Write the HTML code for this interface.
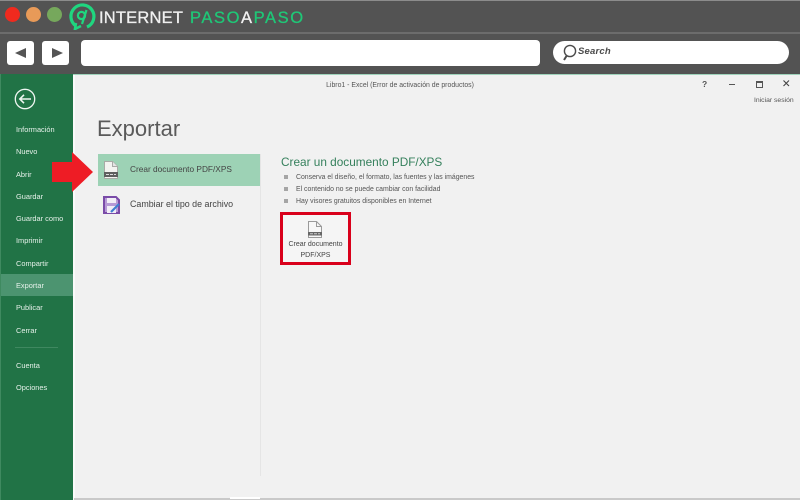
<!DOCTYPE html>
<html lang="es">
<head>
<meta charset="utf-8">
<title>Exportar</title>
<style>
html,body{margin:0;padding:0;background:#f1f1f1}
#p{position:relative;width:800px;height:500px;overflow:hidden;background:#f1f1f1;font-family:"Liberation Sans",sans-serif;color:#444;filter:blur(.25px)}
#p div,#p svg{position:absolute}
.t{white-space:nowrap;line-height:12px}
.m{left:16px;color:#e6f1ea;font-size:7.4px;line-height:12px;white-space:nowrap}
.b{color:#555;font-size:6.9px;left:296px;line-height:10px;white-space:nowrap}
.s{left:284px;width:4px;height:4px;background:#a5a5a5}
</style>
</head>
<body>
<div id="p">
<div style="left:0;top:0;width:800px;height:74px;background:#535353"></div>
<div style="left:0;top:0;width:800px;height:1px;background:#8c8c8c"></div>
<div style="left:0;top:32px;width:800px;height:2px;background:#6c6c6c"></div>
<div style="left:5px;top:7px;width:15px;height:15px;border-radius:50%;background:#f02a1e"></div>
<div style="left:26px;top:7px;width:15px;height:15px;border-radius:50%;background:#e89a58"></div>
<div style="left:47px;top:7px;width:15px;height:15px;border-radius:50%;background:#76a85c"></div>
<svg style="left:67px;top:2px" width="30" height="28" viewBox="0 0 30 28" fill="none" stroke="#1fd67f"><path d="M9 24 A11.5 11.5 0 1 1 20 25" stroke-width="3.2"/><path d="M9 21 L8 27 L14 24" stroke-width="2.6"/><circle cx="14.5" cy="13.5" r="3.6" stroke-width="2.2"/><path d="M19.5 8 L15 22" stroke-width="2.2"/></svg>
<div class="t" style="left:99px;top:8px;font-size:16.5px;line-height:20px;color:#f0f0f0;letter-spacing:.2px;-webkit-text-stroke:.3px #f0f0f0">INTERNET</div>
<div class="t" style="left:190px;top:8px;font-size:16.5px;line-height:20px;color:#1fc777;letter-spacing:1.6px;-webkit-text-stroke:.3px #1fc777">PASO<span style="color:#f0f0f0;-webkit-text-stroke:.3px #f0f0f0">A</span>PASO</div>

<div style="left:7px;top:41px;width:27px;height:24px;background:#fff;border-radius:3px"></div>
<div style="left:42px;top:41px;width:27px;height:24px;background:#fff;border-radius:3px"></div>
<svg style="left:15px;top:48px" width="11" height="10"><path d="M0 5 L11 0 V10 Z" fill="#555"/></svg>
<svg style="left:52px;top:48px" width="11" height="10"><path d="M11 5 L0 0 V10 Z" fill="#555"/></svg>
<div style="left:81px;top:40px;width:459px;height:26px;background:#fff;border-radius:4px"></div>
<div style="left:553px;top:41px;width:236px;height:23px;background:#fff;border-radius:11.5px"></div>
<svg style="left:561px;top:43px" width="18" height="19" fill="none" stroke="#4a4a4a"><circle cx="9" cy="8" r="5.6" stroke-width="1.4"/><path d="M5.5 13 L3 17" stroke-width="2"/></svg>
<div class="t" style="left:578px;top:46px;font-size:9.5px;font-style:italic;font-weight:bold;color:#4a4a4a;letter-spacing:.2px">Search</div>

<div style="left:0;top:74px;width:800px;height:1px;background:#9fd3bb"></div>
<div style="left:0;top:74px;width:73px;height:426px;background:#217346"></div>
<div style="left:0;top:74px;width:1px;height:426px;background:#3f8a60"></div>
<div style="left:73px;top:75px;width:2px;height:425px;background:#fafafa"></div>
<div style="left:1px;top:274px;width:72px;height:22px;background:#4c9470"></div>
<svg style="left:14px;top:88px" width="22" height="22" fill="none" stroke="#eef6f1"><circle cx="11" cy="11" r="9.7" stroke-width="1.3"/><path d="M17 11 H6 M10 6.8 L5.8 11 L10 15.2" stroke-width="1.6"/></svg>

<div class="m" style="top:124px">Información</div>
<div class="m" style="top:146px">Nuevo</div>
<div class="m" style="top:169px">Abrir</div>
<div class="m" style="top:191px">Guardar</div>
<div class="m" style="top:213px">Guardar como</div>
<div class="m" style="top:235px">Imprimir</div>
<div class="m" style="top:258px">Compartir</div>
<div class="m" style="top:280px">Exportar</div>
<div class="m" style="top:302px">Publicar</div>
<div class="m" style="top:325px">Cerrar</div>
<div style="left:15px;top:347px;width:43px;height:1px;background:#3f8860"></div>
<div class="m" style="top:360px">Cuenta</div>
<div class="m" style="top:382px">Opciones</div>

<div class="t" style="left:0;top:80px;width:800px;text-align:center;font-size:6.9px;color:#555">Libro1 - Excel (Error de activación de productos)</div>
<div class="t" style="left:702px;top:78px;font-size:8.5px;font-weight:bold;color:#555">?</div>
<div style="left:729px;top:84px;width:6px;height:1px;background:#555"></div>
<div style="left:756px;top:81px;width:5px;height:4px;border:1px solid #555;border-top-width:2px"></div>
<svg style="left:782px;top:79px" width="9" height="9" stroke="#444" stroke-width="1.1"><path d="M1.5 1.5 L7 7 M7 1.5 L1.5 7"/></svg>
<div class="t" style="left:754px;top:95px;font-size:6.8px;color:#555">Iniciar sesión</div>

<div class="t" style="left:97px;top:115px;font-size:22px;line-height:28px;color:#5a5a5a">Exportar</div>
<div style="left:260px;top:154px;width:1px;height:322px;background:#e5e5e5"></div>
<div style="left:98px;top:154px;width:162px;height:32px;background:#9dd2b5"></div>

<svg style="left:52px;top:152px" width="42" height="40"><path d="M0 10 H20 V0 L41 20 L20 40 V30 H0 Z" fill="#ee1c25"/></svg>

<svg style="left:104px;top:161px" width="14" height="18"><path d="M.5 .5 H8.5 L13.5 5.5 V17.5 H.5 Z" fill="#f3f3f0" stroke="#a9aaa6"/><path d="M8.5 .5 V5.5 H13.5" fill="#e5e5e5" stroke="#a9aaa6"/><rect x="0" y="11" width="14" height="5" fill="#5f5f5f"/><path d="M2 13.5 H5 M6 13.5 H9 M10 13.5 H12" stroke="#ddd"/></svg>
<div class="t" style="left:130px;top:163px;font-size:8.3px;color:#444">Crear documento PDF/XPS</div>

<svg style="left:103px;top:196px" width="17" height="18"><path d="M1 1 H13 L16 4 V17 H1 Z" fill="#b79ad6" stroke="#7a4ba8" stroke-width="2"/><rect x="4" y="2" width="9" height="5" fill="#f2eef7"/><rect x="4" y="10" width="9" height="7" fill="#f2eef7"/><path d="M8 16 L16 8" stroke="#3f7fd0" stroke-width="2.2"/></svg>
<div class="t" style="left:130px;top:198px;font-size:8.9px;color:#444">Cambiar el tipo de archivo</div>

<div class="t" style="left:281px;top:154px;font-size:11.8px;line-height:16px;color:#35805c">Crear un documento PDF/XPS</div>
<div class="s" style="top:175px"></div>
<div class="b" style="top:173px">Conserva el diseño, el formato, las fuentes y las imágenes</div>
<div class="s" style="top:187px"></div>
<div class="b" style="top:185px">El contenido no se puede cambiar con facilidad</div>
<div class="s" style="top:199px"></div>
<div class="b" style="top:197px">Hay visores gratuitos disponibles en Internet</div>

<div style="left:280px;top:212px;width:65px;height:47px;border:3px solid #d9001b;background:#f5f5f5"></div>
<svg style="left:308px;top:221px" width="14" height="17"><path d="M.5 .5 H8.5 L13.5 5.5 V16.5 H.5 Z" fill="#f7f7f7" stroke="#9a9a9a"/><path d="M8.5 .5 V5.5 H13.5" fill="none" stroke="#9a9a9a"/><rect x="0" y="11" width="14" height="3.5" fill="#666"/><path d="M2 12.7 H5 M6 12.7 H9 M10 12.7 H12" stroke="#ccc"/></svg>
<div class="t" style="left:280px;top:240px;width:71px;text-align:center;font-size:7px;line-height:10.5px;color:#444">Crear documento<br>PDF/XPS</div>

<div style="left:74px;top:498px;width:726px;height:2px;background:#c9c9c9"></div>
<div style="left:230px;top:497px;width:30px;height:2px;background:#fff"></div>
</div>
</body>
</html>
